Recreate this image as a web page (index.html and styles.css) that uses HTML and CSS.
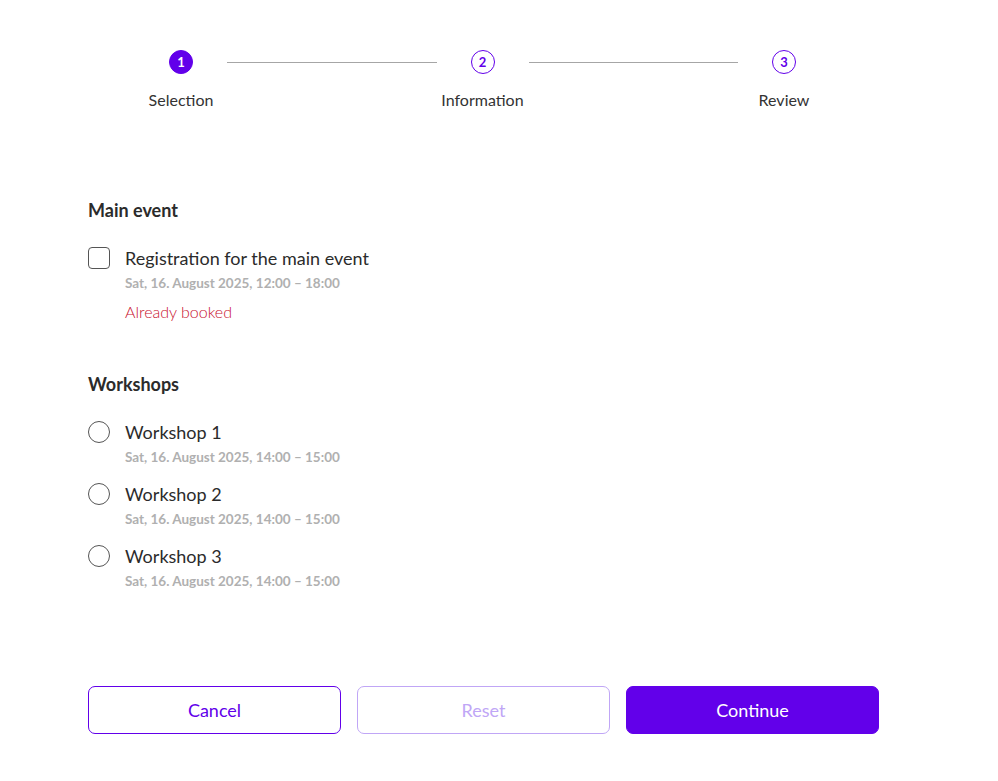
FILE: index.html
```html
<!DOCTYPE html>
<html lang="en">
<head>
<meta charset="utf-8">
<title>Registration</title>
<link rel="stylesheet" href="styles.css">
</head>
<body>
<div class="page">
  <div class="stepper">
    <div class="step active"><span class="dot">1</span><span class="label">Selection</span></div>
    <div class="line"></div>
    <div class="step"><span class="dot">2</span><span class="label">Information</span></div>
    <div class="line"></div>
    <div class="step"><span class="dot">3</span><span class="label">Review</span></div>
  </div>

  <section class="group first">
    <h2 class="group-title">Main event</h2>
    <div class="option">
      <span class="check"></span>
      <div class="option-body">
        <div class="option-title">Registration for the main event</div>
        <div class="option-date">Sat, 16. August 2025, 12:00 – 18:00</div>
        <div class="option-note">Already booked</div>
      </div>
    </div>
  </section>

  <section class="group second">
    <h2 class="group-title">Workshops</h2>
    <div class="option">
      <span class="radio"></span>
      <div class="option-body">
        <div class="option-title">Workshop 1</div>
        <div class="option-date">Sat, 16. August 2025, 14:00 – 15:00</div>
      </div>
    </div>
    <div class="option">
      <span class="radio"></span>
      <div class="option-body">
        <div class="option-title">Workshop 2</div>
        <div class="option-date">Sat, 16. August 2025, 14:00 – 15:00</div>
      </div>
    </div>
    <div class="option">
      <span class="radio"></span>
      <div class="option-body">
        <div class="option-title">Workshop 3</div>
        <div class="option-date">Sat, 16. August 2025, 14:00 – 15:00</div>
      </div>
    </div>
  </section>

  <div class="actions">
    <button class="btn btn-outline">Cancel</button>
    <button class="btn btn-disabled">Reset</button>
    <button class="btn btn-primary">Continue</button>
  </div>
</div>
</body>
</html>
```

FILE: styles.css
```css
html, body {
  margin: 0;
  padding: 0;
  background: #ffffff;
}
body {
  font-family: Lato, "Open Sans", "Liberation Sans", sans-serif;
  color: #2b2b2b;
}
.page {
  width: 791px;
  padding: 50px 0 0 88px;
}
.stepper {
  display: flex;
  align-items: flex-start;
  padding: 0 49px 0 47px;
}
.step {
  width: 92px;
  display: flex;
  flex-direction: column;
  align-items: center;
}
.dot {
  width: 24px;
  height: 24px;
  box-sizing: border-box;
  border: 1.5px solid #6200ea;
  border-radius: 50%;
  color: #6200ea;
  font-size: 13px;
  font-weight: 700;
  display: flex;
  align-items: center;
  justify-content: center;
  line-height: 1;
}
.step.active .dot {
  background: #6200ea;
  color: #ffffff;
}
.label {
  margin-top: 16px;
  font-size: 16px;
  line-height: 20px;
  color: #333333;
  white-space: nowrap;
}
.line {
  flex: 1;
  height: 1px;
  background: #a6a6a6;
  margin-top: 12px;
}
.group-title {
  margin: 0;
  font-size: 18px;
  line-height: 24px;
  font-weight: 700;
  color: #2b2b2b;
}
.group.first {
  margin-top: 88px;
}
.group.second {
  margin-top: 50px;
}
.option {
  display: flex;
  align-items: flex-start;
  margin-top: 24px;
}
.option + .option {
  margin-top: 15px;
}
.check, .radio {
  flex: none;
  width: 22px;
  height: 22px;
  box-sizing: border-box;
  border: 1.5px solid #555555;
  margin-top: 1px;
}
.check {
  border-radius: 4px;
}
.radio {
  border-radius: 50%;
}
.option-body {
  margin-left: 15px;
}
.option-title {
  font-size: 18px;
  line-height: 24px;
  color: #2b2b2b;
}
.option-date {
  margin-top: 3px;
  font-size: 13.5px;
  line-height: 20px;
  font-weight: 700;
  color: #b0b0b0;
}
.option-note {
  margin-top: 9px;
  font-size: 16px;
  line-height: 20px;
  font-weight: 300;
  color: #c8102e;
}
.actions {
  display: flex;
  gap: 16px;
  margin-top: 95px;
}
.btn {
  flex: 1;
  height: 48px;
  border-radius: 7px;
  font-family: Lato, "Open Sans", "Liberation Sans", sans-serif;
  font-size: 18px;
  background: #ffffff;
  cursor: pointer;
}
.btn-outline {
  border: 1.5px solid #6200ea;
  color: #6200ea;
}
.btn-disabled {
  border: 1.5px solid #c0a6f6;
  color: #c0a6f6;
}
.btn-primary {
  border: 1.5px solid #6200ea;
  background: #6200ea;
  color: #ffffff;
}
```
